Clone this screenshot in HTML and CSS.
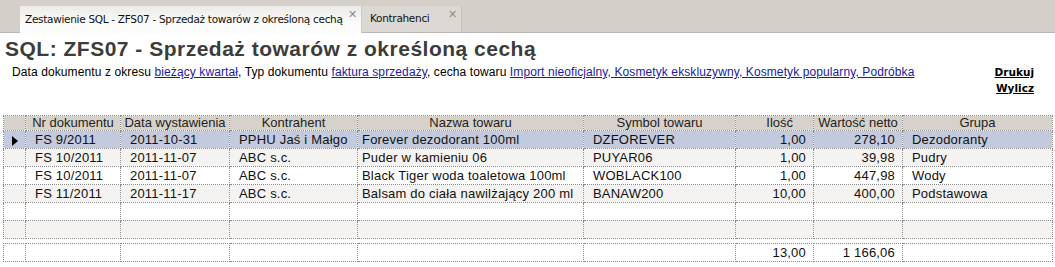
FILE: index.html
```html
<!DOCTYPE html>
<html lang="pl">
<head>
  <meta charset="UTF-8" />
  <title>Zestawienie SQL - ZFS07</title>
  <link rel="stylesheet" href="styles.css">
</head>
<body>
  <div class="tabbar">
    <div class="tab active">
      <span>Zestawienie SQL - ZFS07 - Sprzedaż towarów z określoną cechą</span>
      <span class="close">✕</span>
    </div>
    <div class="tab">
      <span>Kontrahenci</span>
      <span class="close">✕</span>
    </div>
  </div>

  <h1 class="title">SQL: ZFS07 - Sprzedaż towarów z określoną cechą</h1>

  <div class="filters">
    <p>Data dokumentu z okresu <a href="#">bieżący kwartał</a>, Typ dokumentu <a href="#">faktura sprzedaży</a>, cecha towaru <a href="#">Import nieoficjalny, Kosmetyk ekskluzywny, Kosmetyk popularny, Podróbka</a></p>
    <div class="actions">
      <a href="#">Drukuj</a>
      <a href="#">Wylicz</a>
    </div>
  </div>

  <table class="grid">
    <colgroup>
      <col style="width:22px">
      <col style="width:95px">
      <col style="width:109px">
      <col style="width:128px">
      <col style="width:226px">
      <col style="width:152px">
      <col style="width:78px">
      <col style="width:89px">
      <col style="width:150px">
    </colgroup>
    <thead>
      <tr>
        <th></th>
        <th>Nr dokumentu</th>
        <th>Data wystawienia</th>
        <th>Kontrahent</th>
        <th>Nazwa towaru</th>
        <th>Symbol towaru</th>
        <th class="th-num">Ilość</th>
        <th>Wartość netto</th>
        <th>Grupa</th>
      </tr>
    </thead>
    <tbody>
      <tr class="selected">
        <td class="ind"><span class="arrow"></span></td>
        <td>FS 9/2011</td><td>2011-10-31</td><td>PPHU Jaś i Małgo</td>
        <td class="name">Forever dezodorant 100ml</td><td>DZFOREVER</td>
        <td class="num">1,00</td><td class="num">278,10</td><td>Dezodoranty</td>
      </tr>
      <tr class="alt">
        <td class="ind"></td>
        <td>FS 10/2011</td><td>2011-11-07</td><td>ABC s.c.</td>
        <td class="name">Puder w kamieniu 06</td><td>PUYAR06</td>
        <td class="num">1,00</td><td class="num">39,98</td><td>Pudry</td>
      </tr>
      <tr>
        <td class="ind"></td>
        <td>FS 10/2011</td><td>2011-11-07</td><td>ABC s.c.</td>
        <td class="name">Black Tiger woda toaletowa 100ml</td><td>WOBLACK100</td>
        <td class="num">1,00</td><td class="num">447,98</td><td>Wody</td>
      </tr>
      <tr class="alt">
        <td class="ind"></td>
        <td>FS 11/2011</td><td>2011-11-17</td><td>ABC s.c.</td>
        <td class="name">Balsam do ciała nawilżający 200 ml</td><td>BANAW200</td>
        <td class="num">10,00</td><td class="num">400,00</td><td>Podstawowa</td>
      </tr>
      <tr>
        <td class="ind"></td><td></td><td></td><td></td><td></td><td></td><td></td><td></td><td></td>
      </tr>
      <tr class="alt">
        <td class="ind"></td><td></td><td></td><td></td><td></td><td></td><td></td><td></td><td></td>
      </tr>
    </tbody>
  </table>

  <table class="grid footer">
    <colgroup>
      <col style="width:22px">
      <col style="width:95px">
      <col style="width:109px">
      <col style="width:128px">
      <col style="width:226px">
      <col style="width:152px">
      <col style="width:78px">
      <col style="width:89px">
      <col style="width:150px">
    </colgroup>
    <tr>
      <td></td><td></td><td></td><td></td><td></td><td></td>
      <td class="num">13,00</td><td class="num">1 166,06</td><td></td>
    </tr>
  </table>
</body>
</html>
```

FILE: styles.css
```css
body {
  margin: 0;
  font-family: 'Liberation Sans', Arial, sans-serif;
  color: #000;
  background: #fff;
}

/* zakladki */
.tabbar {
  display: flex;
  align-items: flex-end;
  height: 33px;
  padding-left: 20px;
  background: #d4cfc9;
  border-bottom: 1px solid #b9b7b4;
  box-sizing: border-box;
}

.tab {
  display: flex;
  align-items: center;
  justify-content: space-between;
  height: 26px;
  padding: 0 4px 2px 8px;
  box-sizing: border-box;
  font-family: 'DejaVu Sans', sans-serif;
  font-size: 10.5px;
  letter-spacing: -0.3px;
  color: #111;
  background: #dcd8d3;
  border-right: 1px solid #c6c2bd;
}

.tab.active {
  width: 342px;
  padding-left: 5px;
  background: linear-gradient(#ecebe9, #fcfcfc 70%);
  margin-bottom: -1px;
  height: 27px;
  border-right: 1px solid #cfcac4;
}

.tab:not(.active) {
  width: 100px;
}

.close {
  font-size: 11px;
  font-weight: bold;
  color: #8f8c88;
  align-self: flex-start;
  margin-top: 2px;
}

.title {
  margin: 4px 0 0 5px;
  font-size: 21px;
  font-weight: bold;
  color: #3c3c3c;
  letter-spacing: 0.5px;
  line-height: 24px;
}

.filters {
  display: flex;
  justify-content: space-between;
  padding: 0 21px 0 12px;
  font-size: 12px;
}

.filters p {
  margin: 4px 0 0 0;
  letter-spacing: 0.1px;
}

.filters p a {
  color: #1a1aa6;
}

.actions {
  display: flex;
  flex-direction: column;
  align-items: flex-end;
  margin-top: 3px;
  line-height: 16px;
}

.actions a {
  color: #000;
  font-family: 'DejaVu Sans', sans-serif;
  font-weight: bold;
  font-size: 10.5px;
}

/* siatka */
.grid {
  border-collapse: collapse;
  table-layout: fixed;
  margin: 19px 0 0 3px;
  font-size: 13px;
  letter-spacing: 0.2px;
  width: 1049px;
}

.grid th,
.grid td {
  border: 1px dotted #8a8a8a;
  padding: 0 4px 0 9px;
  white-space: nowrap;
  overflow: hidden;
  color: #111;
}

.grid th {
  height: 14px;
  padding: 0;
  background: #d6d2cb;
  font-weight: normal;
  line-height: 14px;
  letter-spacing: 0;
  color: #222;
}

.grid th.th-num {
  text-align: right;
  padding-right: 20px;
}

.grid td {
  height: 17px;
  line-height: 17px;
}

.grid td.name {
  padding-left: 4px;
}

.grid tr.alt td {
  background: #f4f3f1;
}

.grid tr.selected td {
  background: #c3cadd;
}

.grid td.num {
  text-align: right;
  padding-right: 7px;
}

.grid td.ind {
  padding: 0;
  text-align: center;
}

.arrow {
  display: inline-block;
  width: 0;
  height: 0;
  border-top: 5px solid transparent;
  border-bottom: 5px solid transparent;
  border-left: 6px solid #000;
  vertical-align: middle;
}

.grid.footer {
  margin-top: 4px;
}
```
